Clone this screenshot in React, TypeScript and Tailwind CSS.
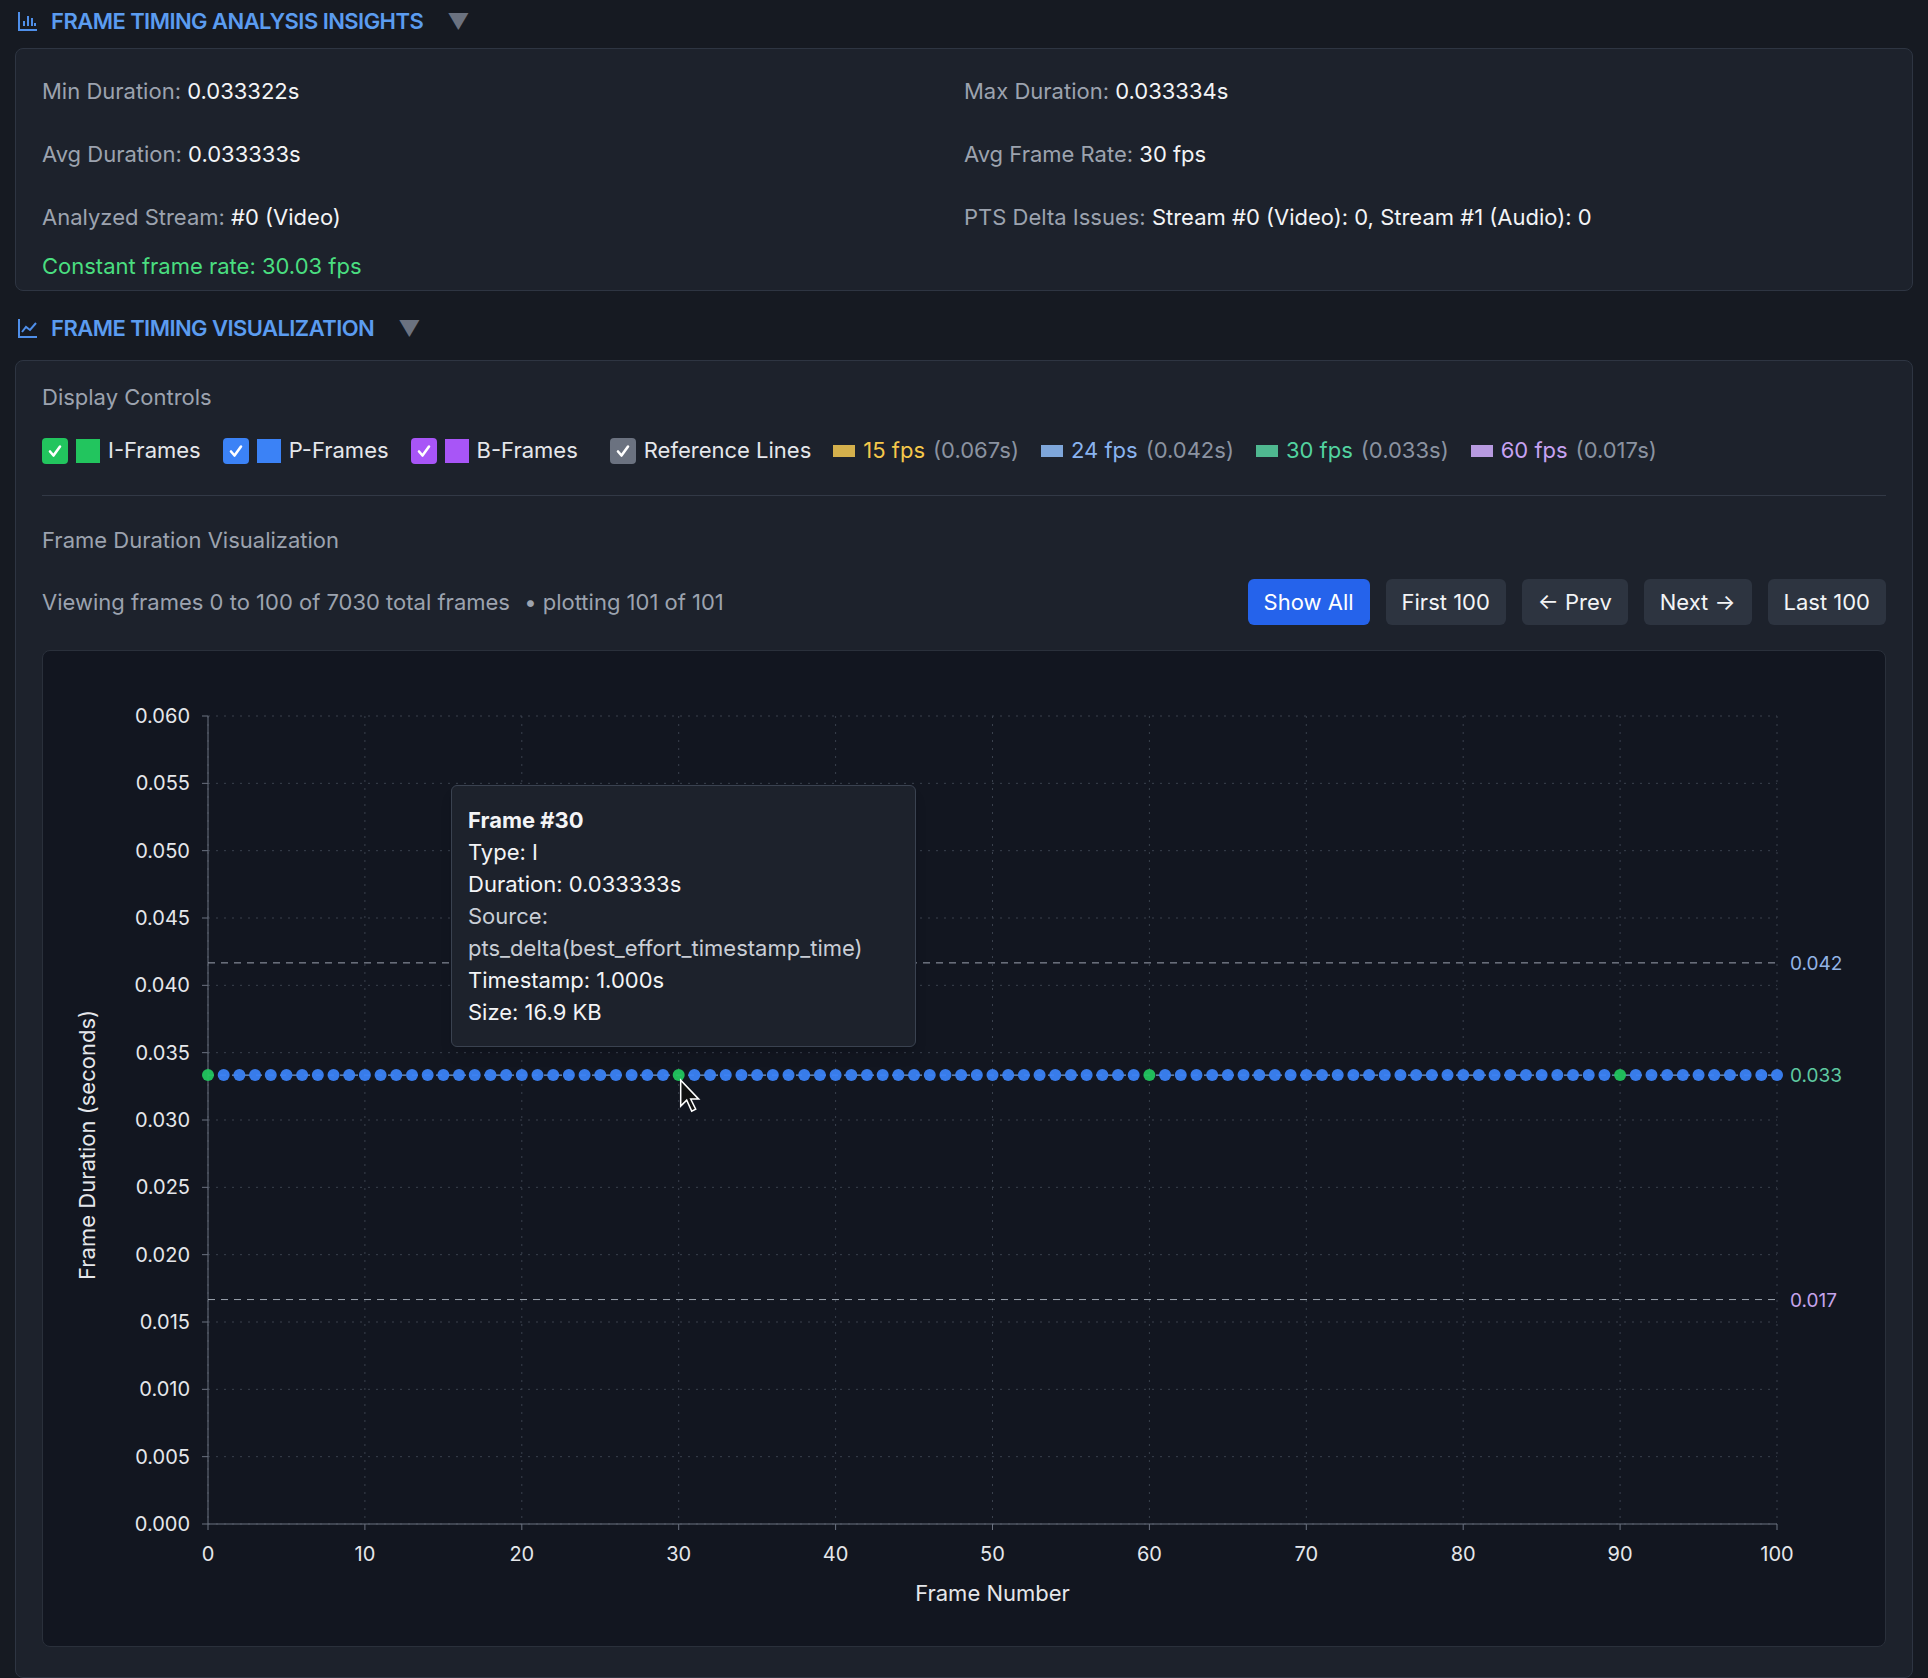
import React from "react"

const W = 1848
const H = 995
const X0 = 165
const X1 = 1734
const YT = 65
const YB = 873

const xs = (f: number) => X0 + (f / 100) * (X1 - X0)
const ys = (v: number) => YB - (v / 0.06) * (YB - YT)

function Chart() {
  const yTicks = Array.from({ length: 13 }, (_, i) => i * 0.005)
  const xTicks = Array.from({ length: 11 }, (_, i) => i * 10)
  const frames = Array.from({ length: 101 }, (_, i) => i)
  return (
    <svg width={W} height={H} viewBox={`0 0 ${W} ${H}`} className="block" style={{ fontFamily: "Inter, sans-serif" }}>
      {yTicks.map((v) => (
        <g key={v}>
          <line x1={X0} x2={X1} y1={ys(v)} y2={ys(v)} stroke="#3a414d" strokeDasharray="2 6" />
          <line x1={X0 - 6} x2={X0} y1={ys(v)} y2={ys(v)} stroke="#6b7280" />
          <text x={X0 - 18} y={ys(v) + 7} textAnchor="end" fill="#e5e7eb" fontSize="20">
            {v.toFixed(3)}
          </text>
        </g>
      ))}
      {xTicks.map((f) => (
        <g key={f}>
          <line x1={xs(f)} x2={xs(f)} y1={YT} y2={YB} stroke="#3a414d" strokeDasharray="2 6" />
          <line x1={xs(f)} x2={xs(f)} y1={YB} y2={YB + 6} stroke="#6b7280" />
          <text x={xs(f)} y={YB + 37} textAnchor="middle" fill="#e5e7eb" fontSize="20">
            {f}
          </text>
        </g>
      ))}
      <line x1={X0} x2={X0} y1={YT} y2={YB} stroke="#6b7280" />
      <line x1={X0} x2={X1} y1={YB} y2={YB} stroke="#6b7280" />
      <line x1={X0} x2={X1} y1={ys(0.041667)} y2={ys(0.041667)} stroke="#9ca3af" strokeDasharray="7 6" />
      <line x1={X0} x2={X1} y1={ys(0.016667)} y2={ys(0.016667)} stroke="#9ca3af" strokeDasharray="7 6" />
      <text x={X1 + 13} y={ys(0.041667) + 7} fill="#93b4e6" fontSize="19">0.042</text>
      <text x={X1 + 13} y={ys(0.033333) + 7} fill="#5ec9a0" fontSize="19">0.033</text>
      <text x={X1 + 13} y={ys(0.016667) + 7} fill="#c4a3ea" fontSize="19">0.017</text>
      <line x1={X0} x2={X1} y1={ys(0.033333)} y2={ys(0.033333)} stroke="#93c5fd" strokeDasharray="6 6" />
      {frames.map((f) => (
        <circle
          key={f}
          cx={xs(f)}
          cy={ys(0.033333)}
          r={6}
          fill={f % 30 === 0 ? "#22c55e" : "#3b82f6"}
          fillOpacity={0.95}
        />
      ))}
      <text x={X0 + (X1 - X0) / 2} y={YB + 77} textAnchor="middle" fill="#e5e7eb" fontSize="22">
        Frame Number
      </text>
      <text
        transform={`translate(${52}, ${(YT + YB) / 2 + 25}) rotate(-90)`}
        textAnchor="middle"
        fill="#e5e7eb"
        fontSize="22"
      >
        Frame Duration (seconds)
      </text>
      <path
        d={`M${xs(30) + 2} ${ys(0.033333) + 5} l0 26 l6 -6 l5 11 l4 -2 l-5 -10 l8 0 z`}
        fill="#111"
        stroke="#fff"
        strokeWidth="1.5"
      />
    </svg>
  )
}

function Stat({ label, value }: { label: string; value: string }) {
  return (
    <div className="text-[22px] text-[#9ca3af]">
      {label}: <span className="text-[#f3f4f6]">{value}</span>
    </div>
  )
}

function Check({ color, children }: { color: string; children?: React.ReactNode }) {
  return (
    <span className={`inline-flex h-[26px] w-[26px] items-center justify-center rounded-[4px] ${color}`}>
      <svg width="18" height="18" viewBox="0 0 18 18">
        <path d="M4 9.5 L7.5 13.5 L14 4.5" fill="none" stroke="white" strokeWidth="2.6" strokeLinecap="round" strokeLinejoin="round" />
      </svg>
      {children}
    </span>
  )
}

function Ref({ sw, tc, fps, s }: { sw: string; tc: string; fps: string; s: string }) {
  return (
    <span className="flex items-center gap-2">
      <span className={`inline-block h-[12px] w-[22px] ${sw}`} />
      <span className={tc}>{fps}</span>
      <span className="text-[#8b93a1]">({s})</span>
    </span>
  )
}

export default function App() {
  return (
    <div className="min-h-[1678px] w-[1928px] bg-[#161a22] px-[15px] pt-[6px] text-[#e5e7eb]" style={{ fontFamily: "Inter, 'Noto Sans', sans-serif" }}>
      <div className="flex h-[30px] items-center gap-3 pl-[2px]">
        <svg width="22" height="22" viewBox="0 0 22 22" fill="none" stroke="#4f8fea" strokeWidth="2">
          <path d="M2 2v18h18M7 16v-5M11 16V6M15 16v-8M18 16v-3" />
        </svg>
        <span className="text-[22px] font-semibold tracking-tight text-[#5b9cf0]">FRAME TIMING ANALYSIS INSIGHTS</span>
        <span className="ml-3 text-[22px] text-[#6b7280]">▼</span>
      </div>
      <div className="mt-[12px] grid h-[243px] grid-cols-2 content-start gap-y-[30px] rounded-lg border border-[#2e3542] bg-[#1d222c] px-[26px] pt-[26px]">
        <Stat label="Min Duration" value="0.033322s" />
        <Stat label="Max Duration" value="0.033334s" />
        <Stat label="Avg Duration" value="0.033333s" />
        <Stat label="Avg Frame Rate" value="30 fps" />
        <Stat label="Analyzed Stream" value="#0 (Video)" />
        <Stat label="PTS Delta Issues" value="Stream #0 (Video): 0, Stream #1 (Audio): 0" />
        <div className="-mt-[14px] text-[22px] text-[#4ade80]">Constant frame rate: 30.03 fps</div>
      </div>
      <div className="mt-[22px] flex h-[30px] items-center gap-3 pl-[2px]">
        <svg width="22" height="22" viewBox="0 0 22 22" fill="none" stroke="#4f8fea" strokeWidth="2">
          <path d="M2 2v18h18M5 15l4-5 4 3 6-7" />
        </svg>
        <span className="text-[22px] font-semibold tracking-tight text-[#5b9cf0]">FRAME TIMING VISUALIZATION</span>
        <span className="ml-3 text-[22px] text-[#6b7280]">▼</span>
      </div>
      <div className="mt-[17px] rounded-lg border border-[#2e3542] bg-[#1d222c] px-[26px] pb-[30px] pt-[20px]">
        <div className="text-[22px] text-[#9ca3af]">Display Controls</div>
        <div className="mt-[20px] flex items-center gap-[22px] text-[22px]">
          <span className="flex items-center gap-2">
            <Check color="bg-[#22c55e]" />
            <span className="h-[24px] w-[24px] bg-[#22c55e]" />
            <span>I-Frames</span>
          </span>
          <span className="flex items-center gap-2">
            <Check color="bg-[#3b82f6]" />
            <span className="h-[24px] w-[24px] bg-[#3b82f6]" />
            <span>P-Frames</span>
          </span>
          <span className="flex items-center gap-2">
            <Check color="bg-[#a855f7]" />
            <span className="h-[24px] w-[24px] bg-[#a855f7]" />
            <span>B-Frames</span>
          </span>
          <span className="ml-[10px] flex items-center gap-2">
            <Check color="bg-[#6b7280]" />
            <span>Reference Lines</span>
          </span>
          <Ref sw="bg-[#d4b04c]" tc="text-[#f5c84b]" fps="15 fps" s="0.067s" />
          <Ref sw="bg-[#7ea6da]" tc="text-[#8ab4f0]" fps="24 fps" s="0.042s" />
          <Ref sw="bg-[#4fb890]" tc="text-[#52d3a0]" fps="30 fps" s="0.033s" />
          <Ref sw="bg-[#b79ae0]" tc="text-[#c7a2f2]" fps="60 fps" s="0.017s" />
        </div>
        <div className="mt-[28px] h-px bg-[#323946]" />
        <div className="mt-[28px] text-[22px] text-[#9ca3af]">Frame Duration Visualization</div>
        <div className="mt-[22px] flex items-center justify-between">
          <div className="text-[22px] text-[#9ca3af]">
            Viewing frames 0 to 100 of 7030 total frames <span className="ml-2">• plotting 101 of 101</span>
          </div>
          <div className="flex gap-4 text-[22px]">
            <button className="h-[46px] rounded-md bg-[#2563eb] px-4 text-white">Show All</button>
            <button className="h-[46px] rounded-md bg-[#2d3440] px-4 text-[#f3f4f6]">First 100</button>
            <button className="h-[46px] rounded-md bg-[#2d3440] px-4 text-[#f3f4f6]">← Prev</button>
            <button className="h-[46px] rounded-md bg-[#2d3440] px-4 text-[#f3f4f6]">Next →</button>
            <button className="h-[46px] rounded-md bg-[#2d3440] px-4 text-[#f3f4f6]">Last 100</button>
          </div>
        </div>
        <div className="relative mt-[25px] overflow-hidden rounded-lg border border-[#2a303b] bg-[#121620]">
          <Chart />
          <div className="absolute left-[408px] top-[134px] w-[465px] rounded-md border border-[#3a4250] bg-[#1d222c] px-4 py-[18px] text-[22px] leading-[32px] text-[#f3f4f6] shadow-lg">
            <div className="font-bold">Frame #30</div>
            <div>Type: I</div>
            <div>Duration: 0.033333s</div>
            <div className="text-[#c9ced6]">Source:</div>
            <div className="text-[#c9ced6]">pts_delta(best_effort_timestamp_time)</div>
            <div>Timestamp: 1.000s</div>
            <div>Size: 16.9 KB</div>
          </div>
        </div>
      </div>
    </div>
  )
}
